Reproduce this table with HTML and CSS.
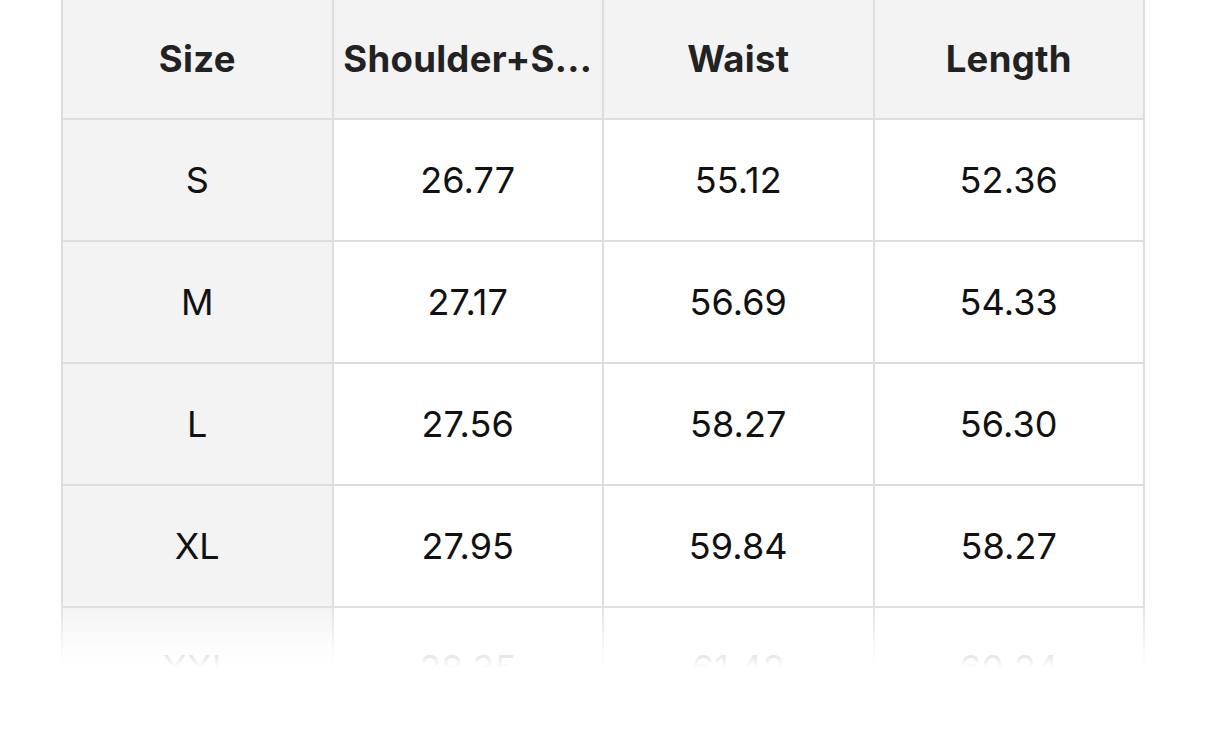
FILE: index.html
```html
<!DOCTYPE html>
<html lang="en">
<head>
<meta charset="utf-8">
<title>Size chart</title>
<link rel="stylesheet" href="styles.css">
</head>
<body>
<main class="page">
  <div class="chart">
    <div class="cell head">Size</div>
    <div class="cell head">Shoulder+S...</div>
    <div class="cell head">Waist</div>
    <div class="cell head">Length</div>

    <div class="cell key">S</div>
    <div class="cell">26.77</div>
    <div class="cell">55.12</div>
    <div class="cell">52.36</div>

    <div class="cell key">M</div>
    <div class="cell">27.17</div>
    <div class="cell">56.69</div>
    <div class="cell">54.33</div>

    <div class="cell key">L</div>
    <div class="cell">27.56</div>
    <div class="cell">58.27</div>
    <div class="cell">56.30</div>

    <div class="cell key">XL</div>
    <div class="cell">27.95</div>
    <div class="cell">59.84</div>
    <div class="cell">58.27</div>

    <div class="cell key">XXL</div>
    <div class="cell">28.35</div>
    <div class="cell">61.42</div>
    <div class="cell">60.24</div>
  </div>
  <div class="fade"></div>
</main>
</body>
</html>
```

FILE: styles.css
```css
html, body {
  margin: 0;
  padding: 0;
  background: #ffffff;
}

.page {
  position: relative;
  height: 729px;
  overflow: hidden;
  padding-left: 61px;
  box-sizing: border-box;
  font-family: "Inter", "Liberation Sans", sans-serif;
}

.chart {
  width: 1084px;
  display: grid;
  grid-template-columns: repeat(4, 1fr);
  grid-template-rows: 118px;
  grid-auto-rows: 120px;
  gap: 2px;
  padding: 0 2px 2px 2px;
  box-sizing: border-box;
  background: #dddddd;
}

.cell {
  background: #ffffff;
  display: flex;
  align-items: center;
  justify-content: center;
  font-size: 36px;
  font-weight: 400;
  color: #111111;
  letter-spacing: 0.1px;
  padding: 0 8px;
  min-width: 0;
  white-space: nowrap;
}

.head {
  background: #f3f3f3;
  font-weight: 700;
  color: #222222;
  font-size: 36.5px;
  letter-spacing: 0.3px;
}

.key {
  background: #f3f3f3;
}

.fade {
  position: absolute;
  left: 0;
  right: 0;
  top: 600px;
  bottom: 0;
  background: linear-gradient(to bottom, rgba(255,255,255,0) 0px, rgba(255,255,255,0.85) 50px, #ffffff 68px, #ffffff 100%);
}
```
